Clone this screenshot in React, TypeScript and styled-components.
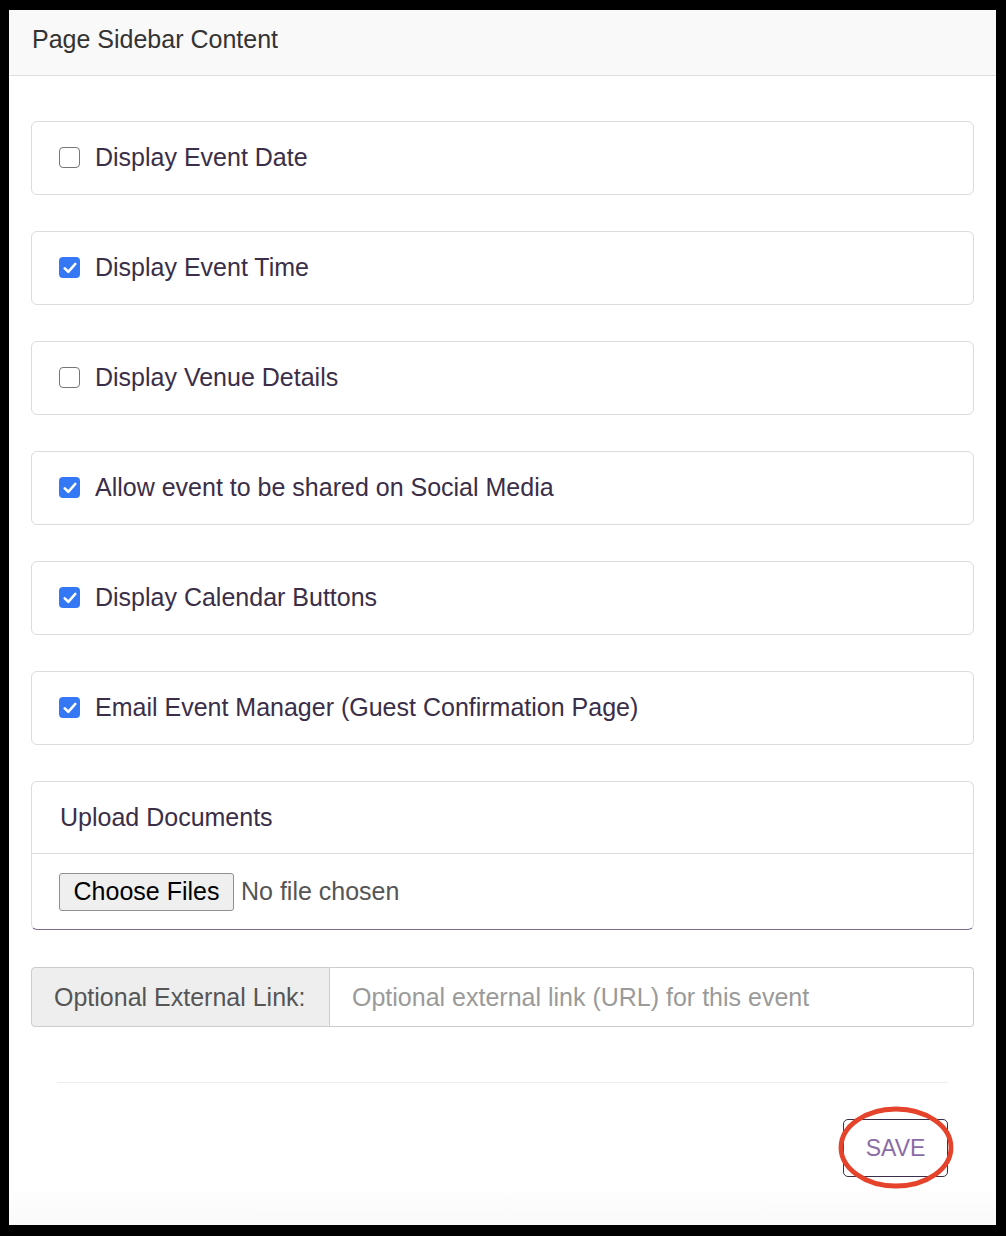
import React from "react";
import styled, { createGlobalStyle } from "styled-components";

const Global = createGlobalStyle`
  html, body {
    margin: 0;
    padding: 0;
    background: #000;
  }
  body {
    font-family: "Liberation Sans", Arial, Helvetica, sans-serif;
  }
`;

const Frame = styled.div`
  padding: 10px 10px 11px 9px;
  background: #000;
`;

const Panel = styled.div`
  background: linear-gradient(to bottom, #fff 0, #fff 1175px, #f9f9f9 100%);
  height: 1215px;
  display: flex;
  flex-direction: column;
`;

const Heading = styled.div`
  height: 66px;
  box-sizing: border-box;
  background: #f9f9f9;
  border-bottom: 1px solid #dedede;
  display: flex;
  align-items: center;
  padding: 0 23px 6px;
  font-size: 25px;
  color: #333;
`;

const Body = styled.div`
  padding: 45px 22px 0;
  display: flex;
  flex-direction: column;
  gap: 36px;
`;

const Card = styled.div`
  border: 1px solid #dcdcdc;
  border-radius: 6px;
  height: 74px;
  box-sizing: border-box;
  display: flex;
  align-items: center;
  padding: 0 27px 1px;
  gap: 15px;
`;

const Box = styled.span<{ $on: boolean }>`
  width: 21px;
  height: 21px;
  box-sizing: border-box;
  border-radius: 4px;
  display: inline-flex;
  align-items: center;
  justify-content: center;
  background: ${(p) => (p.$on ? "#3478f6" : "#fff")};
  border: ${(p) => (p.$on ? "none" : "1.5px solid #767676")};
`;

const Label = styled.span`
  font-size: 25px;
  color: #3a2e48;
`;

const Upload = styled.div`
  border: 1px solid #dcdcdc;
  border-bottom: 1px solid #7d6b8d;
  border-radius: 6px;
`;

const UploadHead = styled.div`
  height: 71px;
  display: flex;
  align-items: center;
  padding: 0 28px;
  border-bottom: 1px solid #dcdcdc;
`;

const UploadBody = styled.div`
  height: 75px;
  display: flex;
  align-items: center;
  padding: 0 27px;
  gap: 7px;
`;

const FileButton = styled.button`
  height: 38px;
  width: 175px;
  box-sizing: border-box;
  margin: 0;
  padding: 0;
  font-family: "Liberation Sans", Arial, sans-serif;
  font-size: 25px;
  color: #000;
  background: #efefef;
  border: 1px solid #8f8f8f;
  border-radius: 3px;
`;

const FileNote = styled.span`
  font-size: 25px;
  color: #555;
`;

const InputGroup = styled.div`
  display: flex;
  height: 60px;
  margin-top: 1px;
`;

const Addon = styled.span`
  width: 299px;
  box-sizing: border-box;
  background: #eee;
  border: 1px solid #ccc;
  border-radius: 4px 0 0 4px;
  display: flex;
  align-items: center;
  padding: 0 22px;
  font-size: 25px;
  color: #555;
`;

const LinkInput = styled.input`
  flex: 1;
  box-sizing: border-box;
  height: 60px;
  margin: 0;
  border: 1px solid #ccc;
  border-left: none;
  border-radius: 0 4px 4px 0;
  padding: 0 22px;
  font-family: "Liberation Sans", Arial, sans-serif;
  font-size: 25px;
  color: #555;
  outline: none;
  &::placeholder {
    color: #9a9a9a;
  }
`;

const Footer = styled.div`
  margin: 55px 48px 0 48px;
  border-top: 1px solid #eee;
  padding-top: 36px;
  display: flex;
  justify-content: flex-end;
`;

const SaveWrap = styled.div`
  position: relative;
`;

const SaveButton = styled.button`
  width: 105px;
  height: 58px;
  box-sizing: border-box;
  background: #fff;
  border: 1px solid #3a2e48;
  border-radius: 5px;
  font-family: "Liberation Sans", Arial, sans-serif;
  font-size: 23px;
  color: #8c6ca6;
  padding: 0;
`;

const Circle = styled.svg`
  position: absolute;
  left: -8px;
  top: -16px;
  pointer-events: none;
`;

const Check = () => (
  <svg width="14" height="12" viewBox="0 0 14 12">
    <path d="M1.8 6.4 L5.3 9.8 L12.2 2" fill="none" stroke="#fff" strokeWidth="2.6" strokeLinecap="round" strokeLinejoin="round" />
  </svg>
);

const options = [
  { label: "Display Event Date", on: false },
  { label: "Display Event Time", on: true },
  { label: "Display Venue Details", on: false },
  { label: "Allow event to be shared on Social Media", on: true },
  { label: "Display Calendar Buttons", on: true },
  { label: "Email Event Manager (Guest Confirmation Page)", on: true },
];

export default function App() {
  return (
    <Frame>
      <Global />
      <Panel>
        <Heading>Page Sidebar Content</Heading>
        <Body>
          {options.map((o) => (
            <Card key={o.label}>
              <Box $on={o.on}>{o.on && <Check />}</Box>
              <Label>{o.label}</Label>
            </Card>
          ))}
          <Upload>
            <UploadHead>
              <Label>Upload Documents</Label>
            </UploadHead>
            <UploadBody>
              <FileButton type="button">Choose Files</FileButton>
              <FileNote>No file chosen</FileNote>
            </UploadBody>
          </Upload>
          <InputGroup>
            <Addon>Optional External Link:</Addon>
            <LinkInput placeholder="Optional external link (URL) for this event" />
          </InputGroup>
        </Body>
        <Footer>
          <SaveWrap>
            <SaveButton type="button">SAVE</SaveButton>
            <Circle width="120" height="90" viewBox="0 0 120 90">
              <ellipse cx="61" cy="44.5" rx="55" ry="38.5" fill="none" stroke="#e5432b" strokeWidth="4.8" />
            </Circle>
          </SaveWrap>
        </Footer>
      </Panel>
    </Frame>
  );
}
